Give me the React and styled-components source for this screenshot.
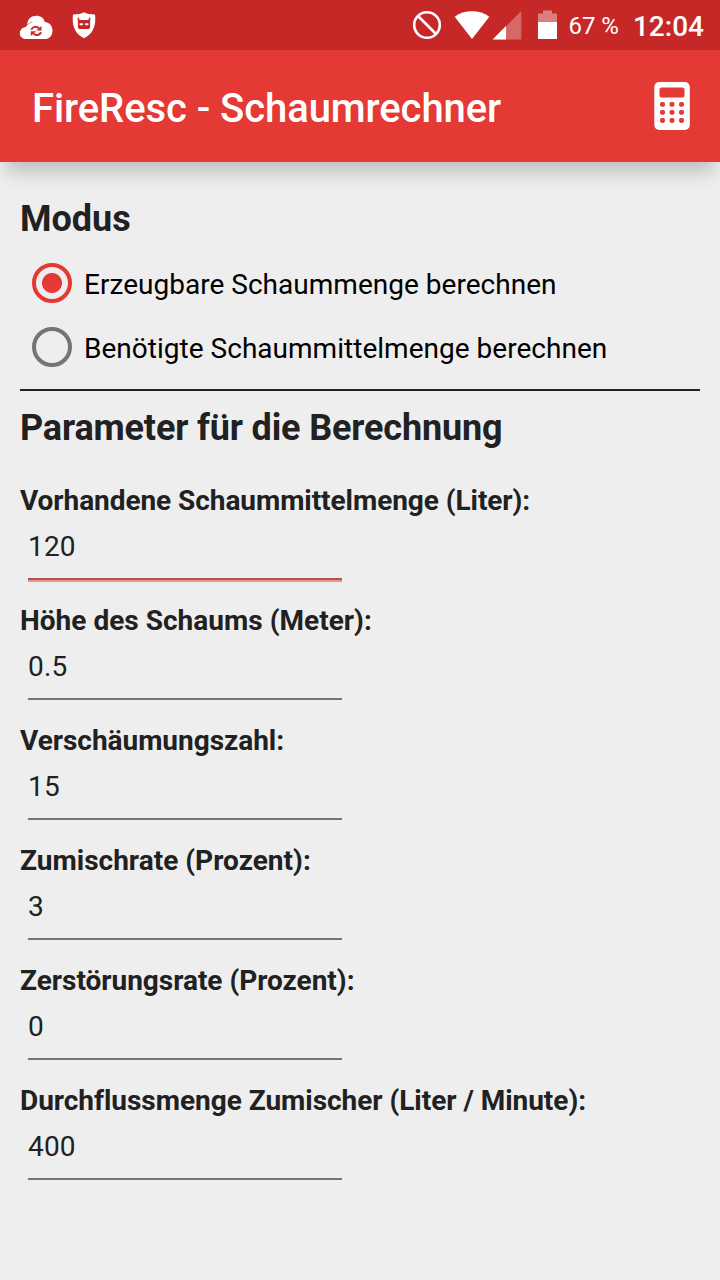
import React, { useState } from "react";
//Style
import styled, { createGlobalStyle } from "styled-components";

//Data
const modes = [
  { id: "foam", label: "Erzeugbare Schaummenge berechnen" },
  { id: "agent", label: "Benötigte Schaummittelmenge berechnen" },
];

const parameters = [
  { id: "amount", label: "Vorhandene Schaummittelmenge (Liter):", value: "120", tracking: -0.06 },
  { id: "height", label: "Höhe des Schaums (Meter):", value: "0.5", tracking: 0.02 },
  { id: "expansion", label: "Verschäumungszahl:", value: "15", tracking: -0.03 },
  { id: "rate", label: "Zumischrate (Prozent):", value: "3", tracking: 0.02 },
  { id: "loss", label: "Zerstörungsrate (Prozent):", value: "0", tracking: -0.02 },
  { id: "flow", label: "Durchflussmenge Zumischer (Liter / Minute):", value: "400", tracking: -0.03 },
];

// Status bar icons
const CloudSyncIcon = () => (
  <svg width="34" height="28" viewBox="0 0 34 28">
    <path fill="#fff" d="M8.300 13C8.500 8 12.500 4.800 17.300 4.800c4.500 0 7.700 2.500 8.500 6.500L20 17z" />
    <path
      fill="#fff"
      d="M7 28c-3.700 0-6.200-2.600-6.200-5.800 0-3.300 2.500-5.700 6-6.200 1.600-3.400 4.200-5.200 7.500-5.200 2.500 0 4.500 1 6 2.300 1.400-1.600 3.200-2.200 5.300-2.200 4.500 0 7.900 3.800 7.900 8.500 0 5.200-3.300 8.600-7.500 8.600z"
    />
    <path fill="none" stroke="#c62828" strokeWidth=".5" d="M7.500 14.700c1.600-2.100 3.600-3.300 6-3.600" />
    <g fill="none" stroke="#c62828" strokeWidth="2">
      <path d="M12.300 18.700c1-3 5.200-4 7.600-1.500" />
      <path d="M22 21.100c-1 3-5.200 4-7.600 1.500" />
    </g>
    <path fill="#c62828" d="M22.500 14.900v4.700h-5.300zM11.800 24.900v-4.700h5.300z" />
  </svg>
);

const ShieldIcon = () => (
  <svg width="24" height="28" viewBox="0 0 24 28">
    <path
      fill="#fff"
      d="M12 1.200c2.500 1.700 6.500 2.200 11 2.200 1.200 11-1.500 19.200-11 23.800C2.500 22.600-.200 14.400 1 3.400c4.500 0 8.500-.500 11-2.200z"
    />
    <path
      fill="#c62828"
      d="M5.500 6.500h1.200l1 2.600h8.600l1-2.600h1.200l-.4 3v6.300c0 1.500-.8 2.300-2.200 2.300H8.100c-1.400 0-2.200-.8-2.200-2.300V9.500z"
    />
    <rect x="7.500" y="12.300" width="3.600" height="1.900" rx=".9" fill="#fff" />
    <rect x="12.900" y="12.300" width="3.600" height="1.900" rx=".9" fill="#fff" />
  </svg>
);

const BlockedIcon = () => (
  <svg width="30" height="30" viewBox="0 0 30 30">
    <g fill="none" stroke="#fff" strokeWidth="2.600">
      <circle cx="15" cy="15" r="12.800" />
      <path d="M6 6l18 18" />
    </g>
  </svg>
);

const WifiIcon = () => (
  <svg width="36" height="30" viewBox="0 0 36 30">
    <path fill="#fff" d="M.700 6.700C10.500-.600 25.500-.600 35.300 6.700L18 29z" />
  </svg>
);

const SignalIcon = () => (
  <svg width="30" height="30" viewBox="0 0 30 30">
    <path fill="#fff" fillOpacity=".3" d="M29.300 1v28.500H.700z" />
    <path fill="#fff" d="M14 16v13.500H.700z" />
  </svg>
);

const BatteryIcon = () => (
  <svg width="19" height="30" viewBox="0 0 19 30">
    <path fill="#fff" fillOpacity=".4" d="M0 3.500h5V.500h9v3h5V12H0z" />
    <path fill="#fff" d="M0 12h19v17H0z" />
  </svg>
);

const CalculatorIcon = () => (
  <svg width="36" height="48" viewBox="0 0 36 48">
    <rect width="35.500" height="48" x=".300" rx="5" fill="#fff" />
    <rect x="5.500" y="5.500" width="25" height="10" rx="2" fill="#e53935" />
    {[22.3, 30.3, 38.5].map((y) =>
      [8.5, 18, 27.5].map((x) => (
        <rect key={`${x}-${y}`} x={x - 2.5} y={y - 2.4} width="5" height="4.800" rx="1.800" fill="#e53935" />
      ))
    )}
  </svg>
);

export default function App() {
  const [mode, setMode] = useState("foam");
  const [active, setActive] = useState("amount");
  const [values, setValues] = useState(
    Object.fromEntries(parameters.map((item) => [item.id, item.value]))
  );

  const changeHandler = (e) => {
    setValues({ ...values, [e.target.name]: e.target.value });
  };

  return (
    <>
      <GlobalStyle />
      <Screen>
        <StatusBar>
          <Notifications>
            <CloudSyncIcon />
            <ShieldIcon />
          </Notifications>
          <System>
            <Indicators>
              <BlockedIcon />
              <Network>
                <WifiIcon />
                <SignalIcon />
              </Network>
            </Indicators>
            <BatteryIcon />
            <Battery>67 %</Battery>
            <Clock>12:04</Clock>
          </System>
        </StatusBar>
        <Toolbar>
          <h1>FireResc - Schaumrechner</h1>
          <Action aria-label="Berechnen">
            <CalculatorIcon />
          </Action>
        </Toolbar>
        <Content>
          <Heading>Modus</Heading>
          <Modes>
            {modes.map((item) => (
              <Mode key={item.id}>
                <Radio
                  type="radio"
                  name="mode"
                  checked={mode === item.id}
                  onChange={() => setMode(item.id)}
                />
                <span>{item.label}</span>
              </Mode>
            ))}
          </Modes>
          <Divider />
          <Heading $tracking={-0.15}>Parameter für die Berechnung</Heading>
          <Parameters>
            {parameters.map((item) => (
              <Field key={item.id}>
                <Label htmlFor={item.id} $tracking={item.tracking}>
                  {item.label}
                </Label>
                <Input
                  id={item.id}
                  name={item.id}
                  value={values[item.id]}
                  $active={active === item.id}
                  onFocus={() => setActive(item.id)}
                  onChange={changeHandler}
                />
              </Field>
            ))}
          </Parameters>
        </Content>
      </Screen>
    </>
  );
}

const GlobalStyle = createGlobalStyle`
  * {
    margin: 0;
    padding: 0;
    box-sizing: border-box;
  }
  body {
    background: #eeeeee;
    font-family: Roboto, sans-serif;
    color: #212121;
  }
  svg {
    display: block;
    flex-shrink: 0;
  }
`;

const Screen = styled.div`
  display: flex;
  flex-direction: column;
  width: 720px;
  height: 1280px;
  overflow: hidden;
  background: #eeeeee;
`;

const StatusBar = styled.header`
  display: flex;
  justify-content: space-between;
  height: 50px;
  padding: 0 16px 0 19px;
  background: #c62828;
  color: #fff;
`;

const Notifications = styled.div`
  display: flex;
  align-items: center;
  gap: 19px;
`;

const System = styled.div`
  display: flex;
  align-items: center;
`;

const Indicators = styled.div`
  display: flex;
  gap: 12px;
  margin-right: 16px;
`;

const Network = styled.div`
  display: flex;
  gap: 2px;
`;

const Battery = styled.span`
  margin-left: 11px;
  padding-top: 2px;
  font-size: 24px;
  line-height: 50px;
`;

const Clock = styled.span`
  margin-left: 14px;
  padding-top: 3px;
  font-size: 28px;
  font-weight: 500;
  line-height: 50px;
`;

const Toolbar = styled.div`
  display: flex;
  align-items: center;
  justify-content: space-between;
  height: 112px;
  padding: 0 30px 0 32px;
  background: #e53935;
  box-shadow: 0 15px 18px -6px rgba(0, 0, 0, 0.21);
  color: #fff;
  h1 {
    padding-top: 4px;
    font-size: 40px;
    font-weight: 500;
    letter-spacing: -0.08px;
  }
`;

const Action = styled.button`
  border: none;
  background: none;
`;

const Content = styled.main`
  padding: 36px 20px 0;
`;

const Heading = styled.h2`
  font-size: 36px;
  font-weight: 700;
  line-height: 42px;
  letter-spacing: ${(props) => props.$tracking || 0}px;
`;

const Modes = styled.div`
  display: flex;
  flex-direction: column;
  margin-top: 11px;
`;

const Mode = styled.label`
  display: flex;
  align-items: center;
  gap: 12px;
  height: 64px;
  padding-left: 12px;
  font-size: 28px;
  letter-spacing: 0.02px;
  color: #000;
  span {
    padding-top: 2px;
  }
`;

const Radio = styled.input`
  appearance: none;
  width: 40px;
  height: 40px;
  border: 4px solid #757575;
  border-radius: 50%;
  &:checked {
    border-color: #e53935;
    background: radial-gradient(circle, #e53935 9.5px, transparent 10.5px);
  }
`;

const Divider = styled.hr`
  height: 2px;
  margin: 10px 0 16px;
  border: none;
  background: #212121;
`;

const Parameters = styled.div`
  display: flex;
  flex-direction: column;
  gap: 24px;
  margin-top: 35px;
`;

const Field = styled.div`
  display: flex;
  flex-direction: column;
  align-items: flex-start;
  height: 96px;
`;

const Label = styled.label`
  height: 32px;
  padding-top: 1px;
  font-size: 28px;
  font-weight: 700;
  line-height: 32px;
  letter-spacing: ${(props) => props.$tracking}px;
`;

const Input = styled.input`
  width: 314px;
  height: 64px;
  margin-left: 8px;
  padding-bottom: 2px;
  border: none;
  border-bottom: 2px solid ${(props) => (props.$active ? "#b05451" : "#757575")};
  box-shadow: ${(props) => (props.$active ? "0 2px 0 #ea9492" : "none")};
  background: none;
  outline: none;
  font-family: inherit;
  font-size: 28px;
  letter-spacing: 0.2px;
  color: #212121;
`;
